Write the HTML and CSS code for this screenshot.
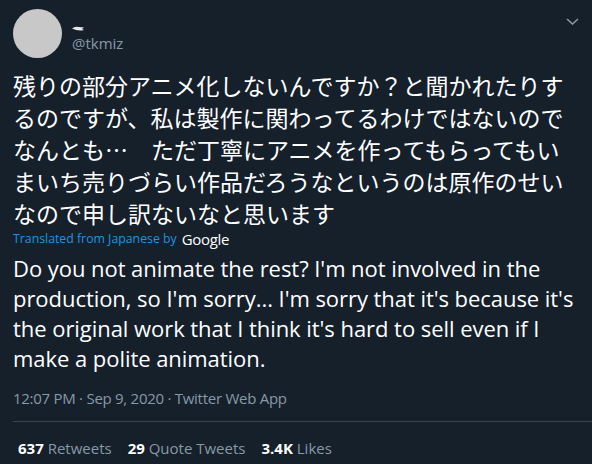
FILE: index.html
```html
<!DOCTYPE html>
<html lang="ja">
<head>
<meta charset="utf-8">
<link rel="stylesheet" href="styles.css">
</head>
<body>
<article class="tweet">
  <header class="head">
    <div class="avatar"></div>
    <div class="who">
      <div class="name"><svg class="name-mark" width="13" height="5" viewBox="0 0 13 5"><path d="M0 2.5 Q3 0 7 1 L12 1.5 L10 3 L12 4 Q6 5.5 0 2.5 Z" fill="#e6e9ec"/></svg></div>
      <div class="handle">@tkmiz</div>
    </div>
    <svg class="chev" width="13" height="7" viewBox="0 0 13 7"><path d="M1 1 L6.5 6 L12 1" fill="none" stroke="#8899a6" stroke-width="1.6"/></svg>
  </header>
  <p class="ja">残りの部分アニメ化しないんですか？と聞かれたりするのですが、私は製作に関わってるわけではないのでなんとも…　ただ丁寧にアニメを作ってもらってもいまいち売りづらい作品だろうなというのは原作のせいなので申し訳ないなと思います</p>
  <div class="translated"><span class="tr-label">Translated from Japanese by</span><span class="google">Google</span></div>
  <p class="en">Do you not animate the rest? I'm not involved in the production, so I'm sorry... I'm sorry that it's because it's the original work that I think it's hard to sell even if I make a polite animation.</p>
  <div class="meta">12:07 PM · Sep 9, 2020 · Twitter Web App</div>
  <div class="stats">
    <span class="stat"><b>637</b> Retweets</span>
    <span class="stat"><b>29</b> Quote Tweets</span>
    <span class="stat"><b>3.4K</b> Likes</span>
  </div>
</article>
</body>
</html>
```
FILE: styles.css
```css
html, body {
  margin: 0;
  padding: 0;
  background: #15202b;
}
body {
  width: 592px;
  height: 464px;
  overflow: hidden;
  font-family: "Open Sans", "Noto Sans CJK JP", sans-serif;
  color: #ffffff;
}
.tweet {
  padding: 9px 0 0 13px;
}
.head {
  display: flex;
  align-items: flex-start;
  padding-right: 13px;
}
.avatar {
  width: 49px;
  height: 49px;
  border-radius: 50%;
  background: #c8c8c8;
  flex: none;
}
.who {
  margin-left: 10px;
  flex: 1;
  padding-top: 17px;
}
.name {
  height: 6px;
  line-height: 0;
}
.name-mark {
  display: block;
}
.handle {
  color: #8899a6;
  font-size: 15px;
  line-height: 20px;
  margin-top: 1px;
}
.chev {
  margin-top: 9px;
}
.ja {
  margin: 11px 0 0;
  font-family: "Noto Sans CJK JP", sans-serif;
  font-size: 23px;
  line-height: 32px;
  padding-right: 13px;
}
.translated {
  display: flex;
  align-items: center;
  height: 19px;
}
.tr-label {
  color: #1b95e0;
  font-size: 12.3px;
}
.google {
  margin-left: 5px;
  font-size: 15px;
  font-weight: 500;
  letter-spacing: -0.3px;
  color: #ffffff;
}
.en {
  margin: 5px 0 0;
  font-size: 22px;
  line-height: 30px;
  letter-spacing: -0.05px;
}
.meta {
  margin-top: 15px;
  color: #8899a6;
  font-size: 15px;
  line-height: 20px;
  letter-spacing: -0.27px;
}
.stats {
  margin-top: 13px;
  border-top: 1px solid #38444d;
  padding: 16px 0 0 5px;
  display: flex;
  gap: 16px;
  font-size: 15px;
  line-height: 20px;
  color: #8899a6;
}
.stat b {
  color: #ffffff;
  font-weight: 700;
}
```
